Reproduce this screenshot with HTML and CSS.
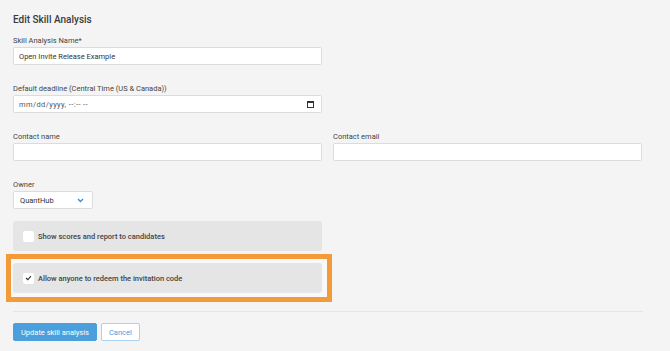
FILE: index.html
```html
<!DOCTYPE html>
<html lang="en">
<head>
    <meta charset="UTF-8">
    <meta name="viewport" content="width=device-width, initial-scale=1.0">
    <title>Edit Skill Analysis</title>
    <link rel="stylesheet" href="styles.css">
</head>
<body>
    <div class="page">
        <h1>Edit Skill Analysis</h1>

        <div class="field">
            <label>Skill Analysis Name*</label>
            <input type="text" class="text-input" value="Open Invite Release Example">
        </div>

        <div class="field">
            <label>Default deadline (Central Time (US &amp; Canada))</label>
            <div class="text-input date-input">
                <span>mm/dd/yyyy, --:-- --</span>
                <svg width="7" height="7" viewBox="0 0 7 7"><rect x="0.5" y="0.5" width="6" height="6" fill="none" stroke="#333" stroke-width="1"/><rect x="0" y="0" width="7" height="2" fill="#333"/></svg>
            </div>
        </div>

        <div class="row">
            <div class="field">
                <label>Contact name</label>
                <input type="text" class="text-input">
            </div>
            <div class="field">
                <label>Contact email</label>
                <input type="email" class="text-input">
            </div>
        </div>

        <div class="field">
            <label>Owner</label>
            <div class="select">
                <span>QuantHub</span>
                <svg width="7" height="5" viewBox="0 0 7 5"><polyline points="1,1 3.5,3.5 6,1" fill="none" stroke="#3b8fd6" stroke-width="1.4"/></svg>
            </div>
        </div>

        <div class="check-panel">
            <span class="box"></span>
            <span>Show scores and report to candidates</span>
        </div>

        <div class="highlight">
            <div class="check-panel">
                <span class="box">
                    <svg width="7" height="6" viewBox="0 0 7 6"><polyline points="1,3 2.8,4.7 6,1.2" fill="none" stroke="#333" stroke-width="1.1"/></svg>
                </span>
                <span>Allow anyone to redeem the invitation code</span>
            </div>
        </div>

        <hr>

        <div class="actions">
            <button class="btn btn-primary">Update skill analysis</button>
            <button class="btn btn-default">Cancel</button>
        </div>
    </div>
</body>
</html>
```

FILE: styles.css
```css
body {
    margin: 0;
    background: #f4f4f4;
    font-family: Roboto, "Liberation Sans", Arial, sans-serif;
    color: #444;
}
.page {
    width: 630px;
    padding: 14px 0 0 13px;
}
h1 {
    margin: 0 0 10px;
    font-size: 10px;
    line-height: 12px;
    font-weight: 500;
    color: #3a3a3a;
}
.field {
    margin-bottom: 19px;
}
.field label {
    display: block;
    font-size: 7.5px;
    line-height: 10px;
    margin-bottom: 1px;
    color: #444;
}
.text-input {
    display: block;
    box-sizing: border-box;
    width: 309px;
    height: 18px;
    margin: 0;
    padding: 0 5px;
    border: 1px solid #dcdcdc;
    border-radius: 2px;
    background: #fff;
    font-family: inherit;
    font-size: 7.5px;
    color: #333;
    outline: none;
}
.date-input {
    display: flex;
    align-items: center;
    justify-content: space-between;
    padding: 0 7px 0 5px;
    margin-top: 1px;
    letter-spacing: 0.4px;
    color: #555;
}
.row {
    display: flex;
    gap: 11px;
}
.select {
    box-sizing: border-box;
    width: 80px;
    height: 18px;
    display: flex;
    align-items: center;
    justify-content: space-between;
    padding: 0 8px 0 6px;
    background: #fff;
    border: 1px solid #dcdcdc;
    border-radius: 2px;
    font-size: 7.5px;
    color: #333;
}
.field:has(.select) {
    margin-bottom: 12px;
}
.check-panel {
    box-sizing: border-box;
    width: 309px;
    height: 30px;
    display: flex;
    align-items: center;
    gap: 4px;
    padding-left: 10px;
    background: #e5e5e5;
    border-radius: 3px;
    font-size: 7.5px;
    font-weight: 500;
    color: #444;
}
.box {
    width: 11px;
    height: 11px;
    background: #fff;
    border-radius: 2px;
    display: flex;
    align-items: center;
    justify-content: center;
}
.highlight {
    width: fit-content;
    margin: 3px 0 0 -7px;
    padding: 4px 5px 4px 2px;
    border: 5px solid #f29b38;
    background: #f8f8f8;
}
hr {
    margin: 9px 0 0;
    border: 0;
    border-top: 1px solid #e4e4e4;
    width: 630px;
}
.actions {
    display: flex;
    gap: 4px;
    margin-top: 11px;
}
.btn {
    height: 18px;
    padding: 0 7px;
    border-radius: 2px;
    font-family: inherit;
    font-size: 7.5px;
}
.btn-primary {
    background: #4a9fdc;
    border: 1px solid #4a9fdc;
    color: #fff;
}
.btn-default {
    background: #fff;
    border: 1px solid #a9d1f0;
    color: #4a9fdc;
}
```
